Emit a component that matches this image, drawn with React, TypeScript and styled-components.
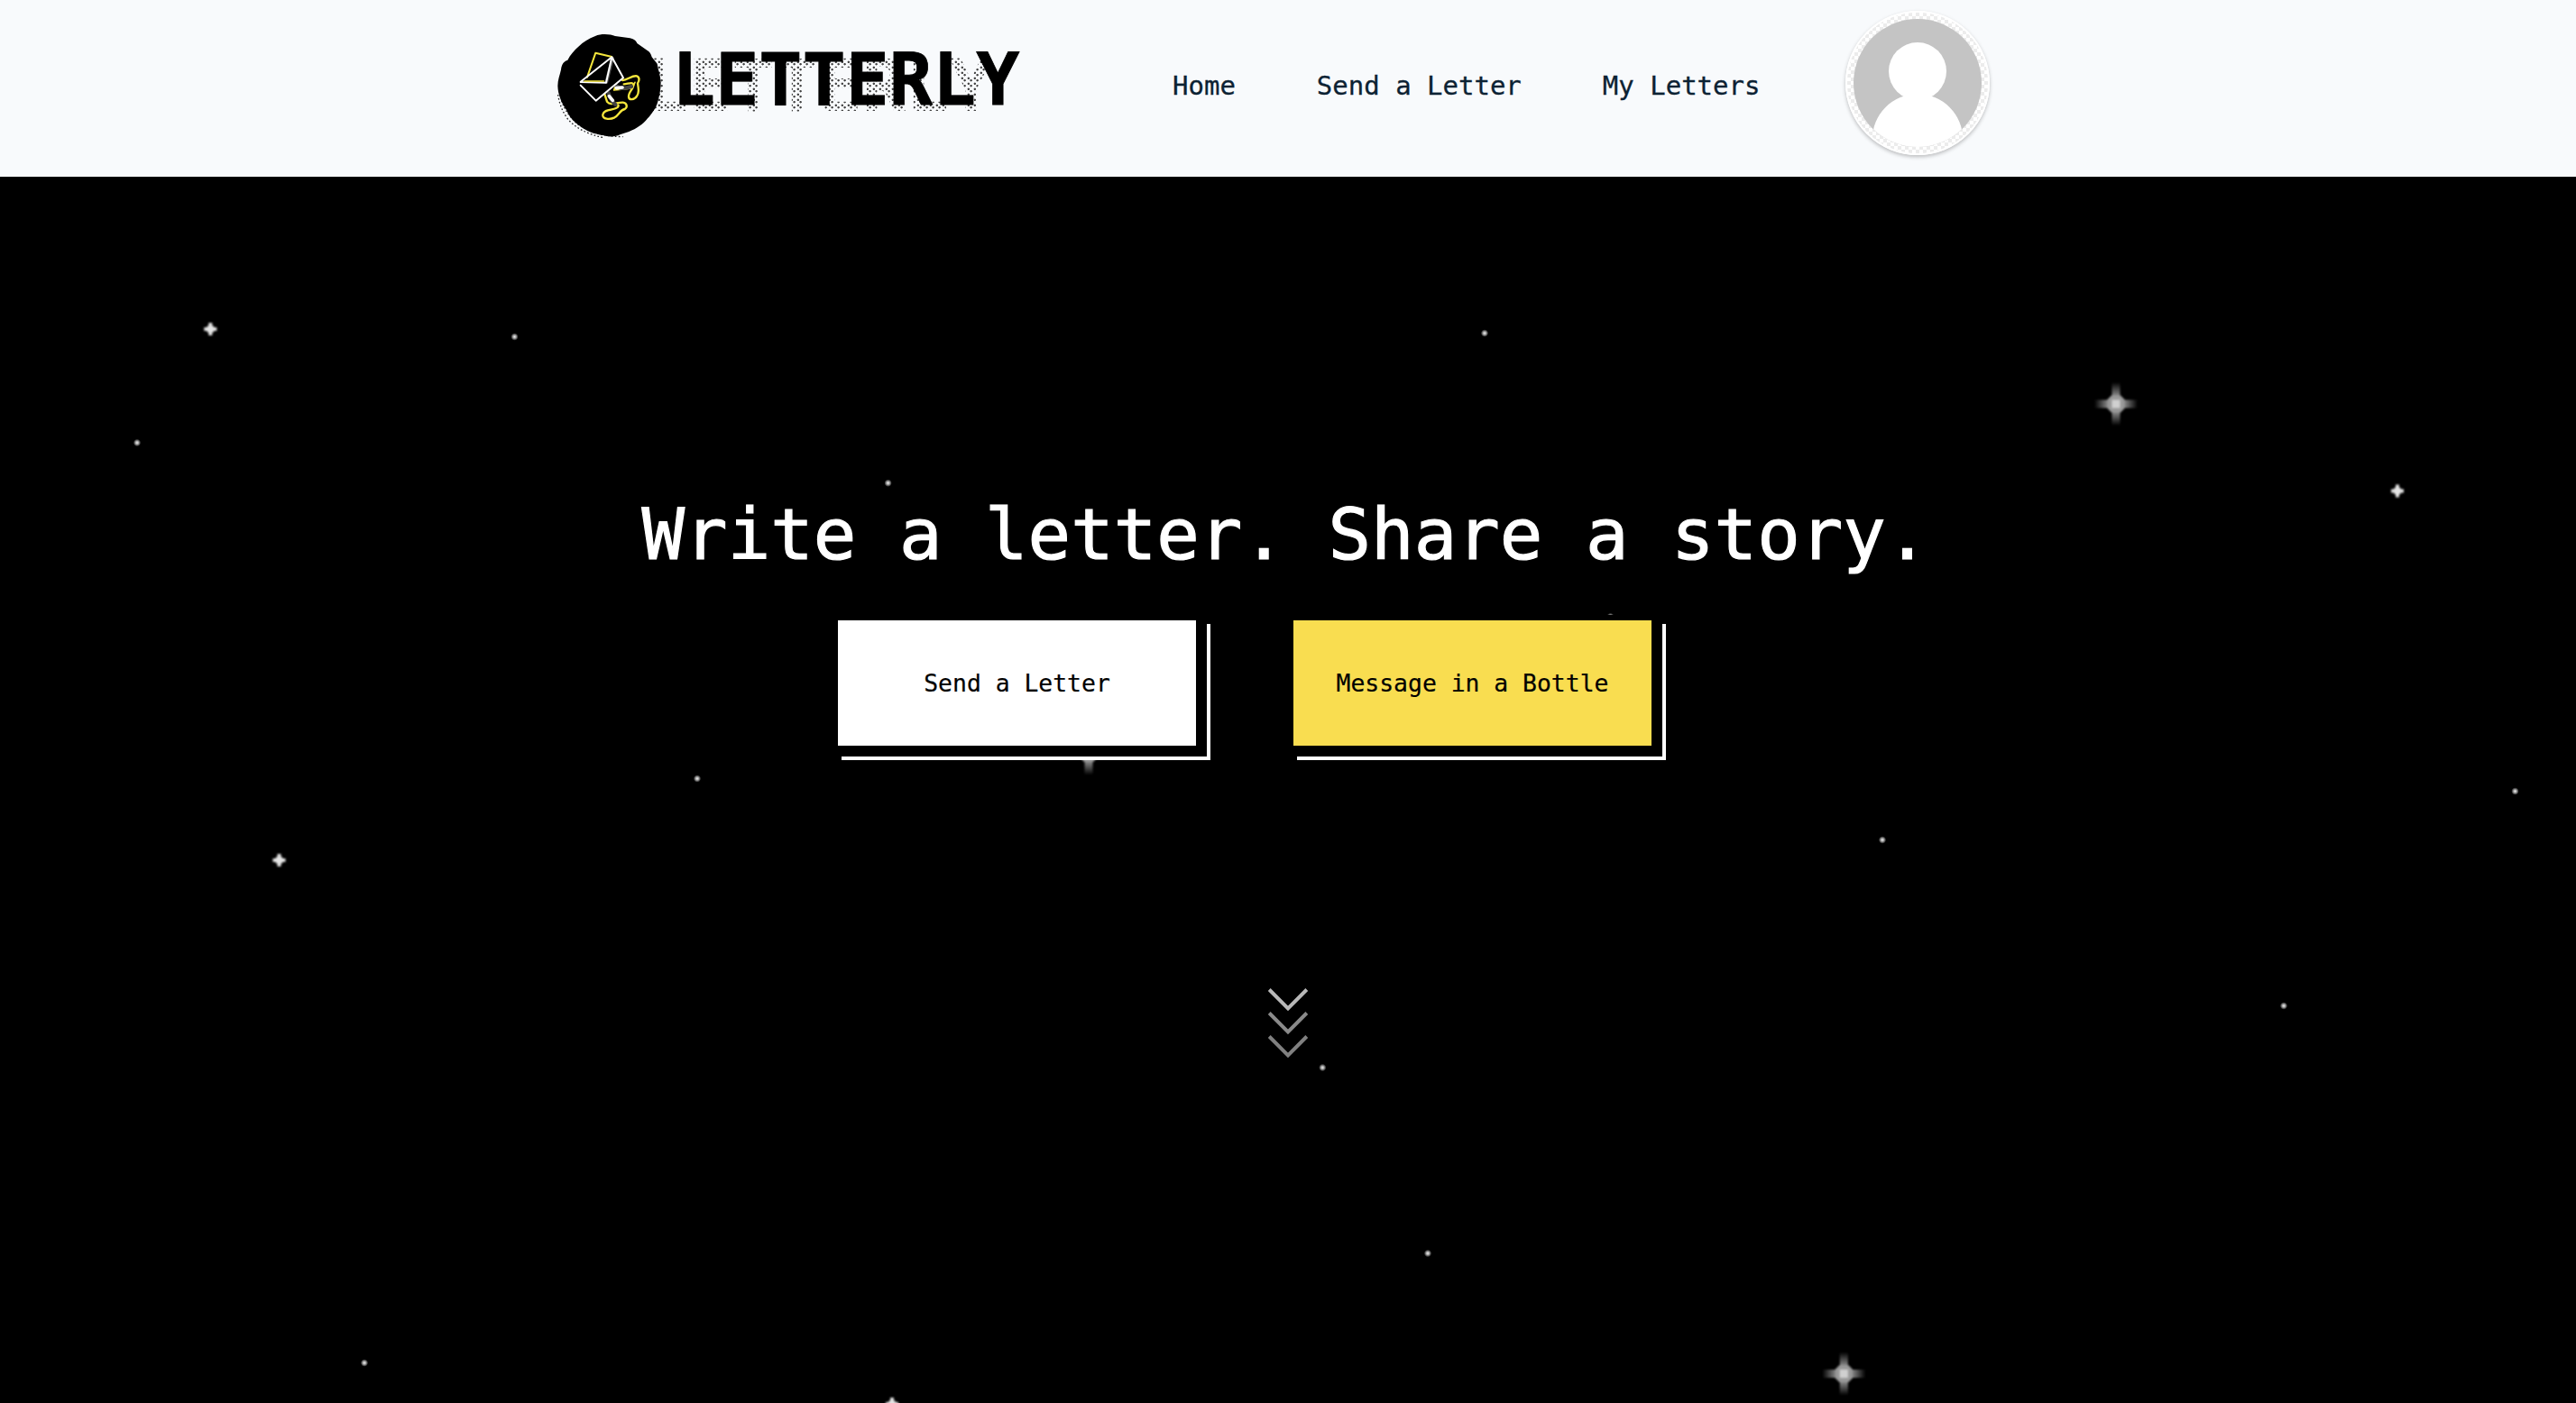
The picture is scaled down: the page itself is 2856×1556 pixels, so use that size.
import React from "react";
import styled, { createGlobalStyle, css } from "styled-components";

const mono = `"DejaVu Sans Mono", "Liberation Mono", monospace`;

const GlobalStyle = createGlobalStyle`
  * { box-sizing: border-box; }
  html, body { margin: 0; padding: 0; background: #000; }
  body { font-family: ${mono}; }
`;

const Page = styled.div`
  display: flex;
  flex-direction: column;
  height: 1556px;
  overflow: hidden;
`;

const Header = styled.header`
  display: flex;
  align-items: center;
  flex: none;
  height: 196px;
  padding: 0 0 6px 618px;
  background: #f8fafc;
`;

const Brand = styled.a`
  display: flex;
  align-items: center;
  width: 682px;
  flex: none;
  text-decoration: none;
`;

const BrandMark = styled.svg`
  display: block;
  position: relative;
  z-index: 1;
  width: 117px;
  height: 117px;
  margin-right: 10px;
`;

const Wordmark = styled.span`
  position: relative;
  margin-bottom: 12px;
  line-height: 94px;
  font-size: 80px;
  font-weight: 700;
  color: #000;
  -webkit-text-stroke: 0.8px #000;

  &::before {
    content: attr(data-text);
    position: absolute;
    left: -30px;
    top: 7px;
    color: transparent;
    -webkit-text-stroke: 0;
    background-image:
      radial-gradient(circle at 1.8px 1.8px, #444 0.8px, transparent 1.6px),
      radial-gradient(circle at 4.6px 4.2px, #444 0.8px, transparent 1.6px);
    background-size: 7px 6px;
    -webkit-background-clip: text;
    background-clip: text;
  }
`;

const WordmarkFace = styled.span`
  position: relative;
`;

const Nav = styled.nav`
  display: flex;
  gap: 90px;
`;

const NavLink = styled.a`
  font-size: 29px;
  line-height: 34px;
  color: #0c2233;
  text-decoration: none;
  white-space: pre;
  -webkit-text-stroke: 0.3px #0c2233;
`;

const Avatar = styled.div`
  flex: none;
  width: 160px;
  height: 160px;
  margin: 0 0 6px 95px;
  border: 2px solid #fff;
  border-radius: 50%;
  overflow: hidden;
  background: repeating-conic-gradient(#ececec 0 25%, #fff 0 50%) 0 0 / 8px 8px;
  box-shadow: 0 2px 4px rgba(0, 0, 0, 0.25);

  svg { display: block; }
`;

const Hero = styled.main`
  position: relative;
  display: flex;
  flex-direction: column;
  flex: 1;
  padding-top: 349px;
  background: #000;
  overflow: hidden;
`;

const Sky = styled.svg`
  position: absolute;
  inset: 0;
`;

const Title = styled.h1`
  position: relative;
  margin: 0;
  padding-right: 6px;
  font-size: 79px;
  font-weight: 400;
  line-height: 96px;
  text-align: center;
  color: #fff;
  white-space: pre;
  -webkit-text-stroke: 1.2px #fff;
`;

const Actions = styled.div`
  position: relative;
  display: flex;
  gap: 108px;
  margin-top: 47px;
  padding-left: 929px;
`;

const ActionButton = styled.button<{ $accent?: boolean }>`
  width: 397px;
  height: 139px;
  padding: 0;
  border: 0;
  font-family: ${mono};
  font-size: 26.4px;
  color: #000;
  -webkit-text-stroke: 0.2px #000;
  background: #fff;
  box-shadow: 0 0 0 6px #000, 6px 6px 0 6px #000, 10px 10px 0 6px #fff;
  ${(p) => p.$accent && css`background: #f9dd50;`}
`;

const ScrollHint = styled.svg`
  position: relative;
  display: block;
  align-self: center;
  margin-top: 263px;
`;

const dots = [
  [152, 491], [570.5, 373.5], [1646, 369.5], [984.6, 535.7], [773, 863.5],
  [2087, 931.5], [2788.5, 877.5], [2532, 1115.5], [1466.3, 1184],
  [1583, 1390], [404, 1511.5], [1785.5, 684],
];
const sparks = [[233.3, 365], [2658, 544.5], [309.5, 954], [989, 1557]];
const flares = [[2346, 448], [2044.3, 1523.5], [1207, 835.5]];

function StarField() {
  return (
    <Sky width="2856" height="1360" viewBox="0 196 2856 1360" aria-hidden="true">
      <defs>
        <radialGradient id="dot">
          <stop offset="0" stopColor="#eee" />
          <stop offset="0.4" stopColor="#aaa" />
          <stop offset="1" stopColor="#000" />
        </radialGradient>
        <linearGradient id="armX">
          <stop offset="0" stopColor="#999" stopOpacity="0" />
          <stop offset="0.35" stopColor="#999" />
          <stop offset="0.65" stopColor="#999" />
          <stop offset="1" stopColor="#999" stopOpacity="0" />
        </linearGradient>
        <linearGradient id="armY" x2="0" y2="1">
          <stop offset="0" stopColor="#999" stopOpacity="0" />
          <stop offset="0.35" stopColor="#999" />
          <stop offset="0.65" stopColor="#999" />
          <stop offset="1" stopColor="#999" stopOpacity="0" />
        </linearGradient>
        <filter id="soft" x="-50%" y="-50%" width="200%" height="200%">
          <feGaussianBlur stdDeviation="0.8" />
        </filter>
      </defs>
      {dots.map(([x, y]) => (
        <circle key={`${x}`} cx={x} cy={y} r="4.2" fill="url(#dot)" />
      ))}
      {sparks.map(([x, y]) => (
        <g key={`${x}`} transform={`translate(${x} ${y})`} fill="#e4e4e4" filter="url(#soft)">
          <rect x="-7" y="-2" width="14" height="4" />
          <rect x="-2" y="-7" width="4" height="14" />
          <rect x="-3.6" y="-3.6" width="7.2" height="7.2" />
        </g>
      ))}
      {flares.map(([x, y]) => (
        <g key={`${x}`} transform={`translate(${x} ${y})`} filter="url(#soft)">
          <rect x="-24" y="-4.5" width="48" height="9" fill="url(#armX)" />
          <rect x="-4.5" y="-24" width="9" height="48" fill="url(#armY)" />
          <path d="M-5-9.500H5L9.500-5V5L5 9.500H-5L-9.500 5V-5Z" fill="#999" />
          <rect x="-4.500" y="-4.500" width="9" height="9" fill="#d0d0d0" />
        </g>
      ))}
    </Sky>
  );
}

function LetterMark() {
  return (
    <BrandMark viewBox="54 51 351 351" aria-hidden="true">
      <path
        d="M56 255Q62 300 90 338Q130 382 208 398M68 275Q80 315 120 352Q180 394 272 395"
        fill="none" stroke="#222" strokeWidth="4" strokeDasharray="5 7"
      />
      <path
        d="M180 60C200 51 232 54 246 60L290 66C305 68 316 74 319 84L352 107C360 111 366 120 368 130L386 152C388 170 397 190 398 214C398 236 394 256 388 278C382 300 368 318 354 334C338 354 318 368 292 378L262 388C246 396 222 396 206 390C176 386 150 376 130 360C106 344 92 326 84 306C66 280 56 254 55 226C55 206 62 190 66 172C68 152 76 144 88 140C96 122 110 108 124 95C140 80 158 68 180 60Z"
        fill="#000"
      />
      <g fill="none" strokeLinecap="round" strokeLinejoin="round">
        <path d="M153 197L181 116L235 129" stroke="#f5e63c" strokeWidth="6" />
        <path d="M246 228L242 240L277 237L303 233L312 214" stroke="#f5e63c" strokeWidth="5" />
        <path d="M270 207C288 206 302 190 318 193C328 197 327 208 321 217C324 237 326 250 318 260C310 273 292 274 291 262C290 246 309 234 307 221C305 211 287 220 275 220" stroke="#f5e63c" strokeWidth="7" />
        <path d="M211 253L219 278C232 293 250 280 272 281C286 283 288 297 278 303C262 306 259 323 244 331C228 339 202 337 205 321C209 304 233 307 249 300C258 297 260 289 252 288" stroke="#f5e63c" strokeWidth="7" />
        <path d="M224 250Q230 272 247 288M250 226Q265 240 300 228" stroke="#444" strokeWidth="13" />
        <path d="M226 260L238 274M250 233L270 231" stroke="#fff" strokeWidth="11" />
        <path d="M237 134L217 213" stroke="#555" strokeWidth="11" />
        <path d="M131 212L235 130L273 199L182 275L131 224M235 130L216 215L131 213" stroke="#fff" strokeWidth="6" />
        <path d="M144 210H208" stroke="#f5e63c" strokeWidth="5" />
      </g>
    </BrandMark>
  );
}

export default function App() {
  return (
    <Page>
      <GlobalStyle />
      <Header>
        <Brand>
          <LetterMark />
          <Wordmark data-text="LETTERLY">
            <WordmarkFace>LETTERLY</WordmarkFace>
          </Wordmark>
        </Brand>
        <Nav>
          <NavLink>Home</NavLink>
          <NavLink>Send a Letter</NavLink>
          <NavLink>My Letters</NavLink>
        </Nav>
        <Avatar>
          <svg width="156" height="156" viewBox="2 2 156 156">
            <clipPath id="disc"><circle cx="80" cy="80" r="71" /></clipPath>
            <g clipPath="url(#disc)">
              <rect width="160" height="160" fill="#c4c4c4" />
              <circle cx="80" cy="67" r="32" fill="#fff" />
              <circle cx="80" cy="142.500" r="50.200" fill="#fff" />
            </g>
          </svg>
        </Avatar>
      </Header>
      <Hero>
        <StarField />
        <Title>Write a letter. Share a story.</Title>
        <Actions>
          <ActionButton>Send a Letter</ActionButton>
          <ActionButton $accent>Message in a Bottle</ActionButton>
        </Actions>
        <ScrollHint width="48" height="86" viewBox="0 0 48 86" fill="none" strokeWidth="4">
          <path d="M3.200 7.500L24 28.300L44.800 7.500" stroke="#b8b8b8" />
          <path d="M3.200 33.500L24 54.300L44.800 33.500" stroke="#8a8a8a" />
          <path d="M3.200 59.500L24 80.300L44.800 59.500" stroke="#808080" />
        </ScrollHint>
      </Hero>
    </Page>
  );
}
